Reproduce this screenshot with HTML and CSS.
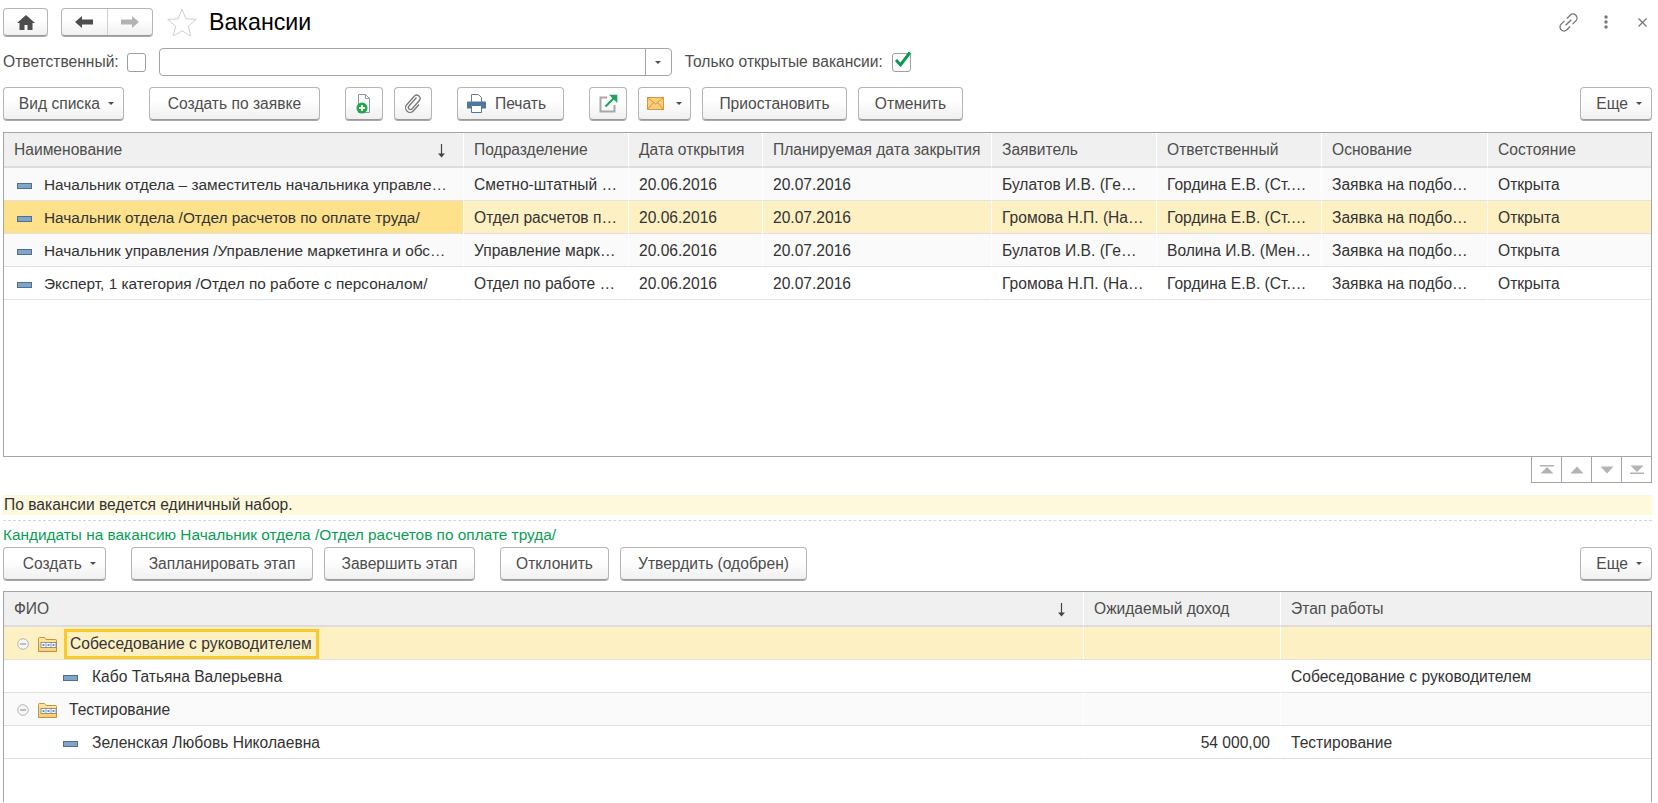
FILE: index.html
```html
<!DOCTYPE html>
<html lang="ru">
<head>
<meta charset="utf-8">
<title>Вакансии</title>
<link rel="stylesheet" href="styles.css">
</head>
<body>
<svg class="sprites" width="0" height="0" aria-hidden="true">
  <defs>
    <linearGradient id="fold" x1="0" y1="0" x2="0" y2="1"><stop offset="0" stop-color="#fde9a6"/><stop offset="1" stop-color="#f7cf72"/></linearGradient>
    <symbol id="dash" viewBox="0 0 15 6"><rect x=".5" y=".5" width="14" height="5" fill="#7fa6c9" stroke="#4f6f8f"/></symbol>
    <symbol id="folder" viewBox="0 0 19 16"><path d="M.5 15.5V2.5a1 1 0 0 1 1-1h5l1.500 2h9.500a1 1 0 0 1 1 1v11z" fill="url(#fold)" stroke="#c98f3c"/><rect x="3" y="6.500" width="15" height="5" fill="#fff" stroke="#6f7f8f" stroke-width=".8"/><path d="M8 6.500v5M13 6.500v5" stroke="#6f7f8f" stroke-width=".8"/><rect x="4.500" y="8" width="2" height="2" fill="#6f8fb0"/><rect x="9.500" y="8" width="2" height="2" fill="#6f8fb0"/><rect x="14.500" y="8" width="2" height="2" fill="#6f8fb0"/></symbol>
    <symbol id="collapse" viewBox="0 0 12 12"><circle cx="6" cy="6" r="5.300" fill="#f6f6f6" stroke="#b5b5b5"/><path d="M3 6h6" stroke="#8a8a8a"/></symbol>
    <symbol id="down" viewBox="0 0 9 14"><path d="M4.500 0v11" stroke="#444" stroke-width="1.200"/><path d="M1 9.500h7l-3.500 4z" fill="#444"/></symbol>
  </defs>
</svg>

<header class="titlebar">
  <button class="btn nav-home" aria-label="Домой"><svg width="18" height="15" viewBox="0 0 18 15"><path d="M9 0 0 8h2.500v7h5v-5h3v5h5V8H18z" fill="#4d4d4d"/></svg></button>
  <div class="btn nav-group">
    <span class="nav-cell"><svg width="18" height="12" viewBox="0 0 18 12"><path d="M0 6l7-6v3.500h11v5H7V12z" fill="#4d4d4d"/></svg></span>
    <span class="nav-cell"><svg width="18" height="12" viewBox="0 0 18 12"><path d="M18 6l-7-6v3.500H0v5h11V12z" fill="#b3b3b3"/></svg></span>
  </div>
  <svg class="star" width="30" height="28" viewBox="0 0 30 28"><path d="M15 1l3.900 9.800 10.400.6-8 6.700 2.600 10.200L15 22.700l-8.900 5.600 2.600-10.200-8-6.700 10.400-.6z" fill="none" stroke="#c9cfd3"/></svg>
  <h1 class="title">Вакансии</h1>
  <div class="window-tools">
    <svg width="23" height="23" viewBox="0 0 20 20"><g transform="rotate(-45 10 10)" fill="none" stroke="#777" stroke-width="1.200"><path d="M8.500 6.500H4.500a3.500 3.500 0 0 0 0 7h4"/><path d="M11.500 6.500h4a3.500 3.500 0 0 1 0 7h-4"/><path d="M6.500 10h7"/></g></svg>
    <svg class="tool-dots" width="4" height="14" viewBox="0 0 4 14"><circle cx="2" cy="2" r="1.700" fill="#777"/><circle cx="2" cy="7" r="1.700" fill="#777"/><circle cx="2" cy="12" r="1.700" fill="#777"/></svg>
    <svg class="tool-close" width="9" height="9" viewBox="0 0 9 9"><path d="M.5.500l8 8M8.500.500l-8 8" stroke="#777" stroke-width="1.200"/></svg>
  </div>
</header>

<section class="filters">
  <span class="label">Ответственный:</span>
  <span class="check"></span>
  <div class="combo"><span class="combo-field"></span><span class="combo-drop"><i class="caret"></i></span></div>
  <span class="label label-open">Только открытые вакансии:</span>
  <span class="check check-on"><svg width="20" height="20" viewBox="0 0 20 20"><path d="M3 9l4.500 5L17 1.500" fill="none" stroke="#0c9a50" stroke-width="3"/></svg></span>
</section>

<div class="toolbar toolbar-top">
  <button class="btn menu w-view">Вид списка<i class="caret"></i></button>
  <button class="btn w-make gap-l">Создать по заявке</button>
  <button class="btn icon gap-l" aria-label="Новый файл"><svg width="16" height="20" viewBox="0 0 16 20"><path d="M2.500.500h7l4 4v14h-11z" fill="#fff" stroke="#8b98a5"/><path d="M9.500.500v4h4" fill="none" stroke="#8b98a5"/><circle cx="6" cy="14" r="5.500" fill="#22a64a"/><path d="M3 14h6M6 11v6" stroke="#fff" stroke-width="1.800"/></svg></button>
  <button class="btn icon gap-s" aria-label="Вложение"><svg width="18" height="20" viewBox="0 0 18 20"><path d="M12.500 3.500 4.800 12.200a2.100 2.100 0 0 0 3.100 2.800l7.300-8.300a3.300 3.300 0 0 0-5-4.400L2.700 10.800a4.500 4.500 0 0 0 6.800 6l5.500-6.300" fill="none" stroke="#777" stroke-width="1.300"/></svg></button>
  <button class="btn w-print gap-l"><svg class="print-icon" width="19" height="19" viewBox="0 0 19 19"><path d="M4.500.500h7l3 3v6h-10z" fill="#fff" stroke="#6d7d8d"/><path d="M1 7.500h17a1 1 0 0 1 1 1v6h-4v-3H4v3H0v-6a1 1 0 0 1 1-1z" fill="#4f76a0"/><path d="M4.500 11.500h10v7h-10z" fill="#fff" stroke="#4f76a0"/></svg>Печать</button>
  <button class="btn icon gap-l" aria-label="Открыть"><svg width="19" height="19" viewBox="0 0 19 19"><path d="M8 3.500H1.500v14h14V11" fill="none" stroke="#a8a8a8" stroke-width="2"/><path d="M6.500 12.500 16 3" stroke="#1ea362" stroke-width="2.200"/><path d="M10 .700h8.300V9z" fill="#1ea362"/></svg></button>
  <button class="btn w-mail gap-s" aria-label="Почта"><svg width="17" height="13" viewBox="0 0 17 13"><rect x=".5" y=".5" width="16" height="12" fill="#f7cf7c" stroke="#d8963a"/><path d="M.5.500 8.500 7l8-6.500M.5 12.500l6-7M16.500 12.500l-6-7" fill="none" stroke="#d8963a"/></svg><i class="caret caret-mail"></i></button>
  <button class="btn w-pause gap-s">Приостановить</button>
  <button class="btn w-cancel gap-s">Отменить</button>
  <button class="btn menu w-more push">Еще<i class="caret"></i></button>
</div>

<section class="grid grid-top">
  <table>
    <colgroup><col class="c1"><col class="c2"><col class="c3"><col class="c4"><col class="c5"><col class="c6"><col class="c7"><col></colgroup>
    <thead><tr>
      <th class="sorted">Наименование<svg class="sort" width="9" height="14"><use href="#down"/></svg></th>
      <th>Подразделение</th><th>Дата открытия</th><th>Планируемая дата закрытия</th><th>Заявитель</th><th>Ответственный</th><th>Основание</th><th>Состояние</th>
    </tr></thead>
    <tbody>
      <tr class="odd"><td class="name"><svg class="dash" width="15" height="6"><use href="#dash"/></svg>Начальник отдела – заместитель начальника управле…</td><td>Сметно-штатный …</td><td>20.06.2016</td><td>20.07.2016</td><td>Булатов И.В. (Ге…</td><td>Гордина Е.В. (Ст.…</td><td>Заявка на подбо…</td><td>Открыта</td></tr>
      <tr class="sel"><td class="name current"><svg class="dash" width="15" height="6"><use href="#dash"/></svg>Начальник отдела /Отдел расчетов по оплате труда/</td><td>Отдел расчетов п…</td><td>20.06.2016</td><td>20.07.2016</td><td>Громова Н.П. (На…</td><td>Гордина Е.В. (Ст.…</td><td>Заявка на подбо…</td><td>Открыта</td></tr>
      <tr class="odd"><td class="name"><svg class="dash" width="15" height="6"><use href="#dash"/></svg>Начальник управления /Управление маркетинга и обс…</td><td>Управление марк…</td><td>20.06.2016</td><td>20.07.2016</td><td>Булатов И.В. (Ге…</td><td>Волина И.В. (Мен…</td><td>Заявка на подбо…</td><td>Открыта</td></tr>
      <tr class="even"><td class="name"><svg class="dash" width="15" height="6"><use href="#dash"/></svg>Эксперт, 1 категория /Отдел по работе с персоналом/</td><td>Отдел по работе …</td><td>20.06.2016</td><td>20.07.2016</td><td>Громова Н.П. (На…</td><td>Гордина Е.В. (Ст.…</td><td>Заявка на подбо…</td><td>Открыта</td></tr>
    </tbody>
  </table>
</section>
<div class="pager">
  <span class="page"><svg width="14" height="9" viewBox="0 0 14 9"><path d="M0 0h14v1.500H0zM7 2l6.500 6.500H.5z" fill="#b3b3b3"/></svg></span>
  <span class="page"><svg width="14" height="8" viewBox="0 0 14 8"><path d="M7 .5l6.500 7H.5z" fill="#b3b3b3"/></svg></span>
  <span class="page"><svg width="14" height="8" viewBox="0 0 14 8"><path d="M7 7.500l6.500-7H.5z" fill="#b3b3b3"/></svg></span>
  <span class="page"><svg width="14" height="9" viewBox="0 0 14 9"><path d="M0 7.500h14V9H0zM7 7 .5 .5h13z" fill="#b3b3b3"/></svg></span>
</div>

<p class="notice">По вакансии ведется единичный набор.</p>
<h2 class="subhead">Кандидаты на вакансию Начальник отдела /Отдел расчетов по оплате труда/</h2>

<div class="toolbar toolbar-bottom">
  <button class="btn menu w-create">Создать<i class="caret"></i></button>
  <button class="btn w-plan gap-l">Запланировать этап</button>
  <button class="btn w-finish gap-s">Завершить этап</button>
  <button class="btn w-reject gap-l">Отклонить</button>
  <button class="btn w-approve gap-s">Утвердить (одобрен)</button>
  <button class="btn menu w-more push">Еще<i class="caret"></i></button>
</div>

<section class="grid grid-bottom">
  <table>
    <colgroup><col class="b1"><col class="b2"><col></colgroup>
    <thead><tr>
      <th class="sorted">ФИО<svg class="sort" width="9" height="14"><use href="#down"/></svg></th><th>Ожидаемый доход</th><th>Этап работы</th>
    </tr></thead>
    <tbody>
      <tr class="sel-soft"><td class="group"><svg class="toggle" width="12" height="12"><use href="#collapse"/></svg><svg class="folder" width="19" height="16"><use href="#folder"/></svg><span class="focus">Собеседование с руководителем</span></td><td></td><td></td></tr>
      <tr class="plain"><td class="person"><svg class="dash" width="15" height="6"><use href="#dash"/></svg>Кабо Татьяна Валерьевна</td><td></td><td>Собеседование с руководителем</td></tr>
      <tr class="odd"><td class="group"><svg class="toggle" width="12" height="12"><use href="#collapse"/></svg><svg class="folder" width="19" height="16"><use href="#folder"/></svg><span class="nofocus">Тестирование</span></td><td></td><td></td></tr>
      <tr class="plain"><td class="person"><svg class="dash" width="15" height="6"><use href="#dash"/></svg>Зеленская Любовь Николаевна</td><td class="num">54 000,00</td><td>Тестирование</td></tr>
    </tbody>
  </table>
</section>
</body>
</html>
```
FILE: styles.css
```css
* { box-sizing: border-box; }
html, body { height: 100%; }
body { margin: 0; padding: 8px 6px 0 3px; height: 803px; overflow: hidden; background: #fff; font: 15.6px "Liberation Sans", Arial, sans-serif; color: #4d4d4d; }
.sprites { position: absolute; }

.btn { display: inline-flex; align-items: center; justify-content: center; height: 33px; padding: 0; border: 1px solid #b5b5b5; border-bottom-color: #9a9a9a; border-radius: 4px; background: linear-gradient(#fff 40%, #f0f0f0); box-shadow: 0 1px 0 #aaa; font: inherit; color: #4d4d4d; white-space: nowrap; }

.titlebar { display: flex; align-items: center; height: 28px; }
.nav-home { width: 45px; height: 28px; }
.nav-group { width: 92px; height: 28px; margin-left: 13px; }
.nav-cell { flex: 1; height: 100%; display: flex; align-items: center; justify-content: center; }
.nav-cell + .nav-cell { border-left: 1px solid #d0d0d0; }
.star { margin-left: 14px; }
.title { margin: 0 0 0 12px; font-size: 23.2px; font-weight: 400; color: #000; }
.window-tools { margin-left: auto; display: flex; align-items: center; padding-right: 5px; }
.tool-dots { margin-left: 24px; }
.tool-close { margin-left: 30px; }

.filters { display: flex; align-items: center; height: 28px; margin-top: 12px; }
.label { color: #4d4d4d; }
.check { width: 19px; height: 19px; margin-left: 8px; border: 1px solid #9f9f9f; border-radius: 3px; position: relative; background: #fff; }
.check svg { position: absolute; left: 0; top: -3px; }
.check-on { margin-left: 9px; }
.combo { display: flex; width: 513px; height: 28px; margin-left: 13px; border: 1px solid #a5a5a5; border-radius: 4px; }
.combo-field { flex: 1; }
.combo-drop { width: 26px; border-left: 1px solid #a5a5a5; display: flex; align-items: center; justify-content: center; }
.label-open { margin-left: 13px; }
.caret { display: inline-block; width: 0; height: 0; border: 3px solid transparent; border-top: 3.500px solid #4d4d4d; border-bottom: 0; }

.toolbar { display: flex; align-items: center; }
.toolbar-top { margin-top: 11px; }
.toolbar-bottom { margin-top: 2px; }
.gap-l { margin-left: 25px; }
.gap-s { margin-left: 11px; }
.push { margin-left: auto; }
.menu { justify-content: flex-end; padding-right: 9px; }
.menu .caret { margin-left: 8px; }
.icon { width: 38px; }
.w-view { width: 121px; }
.w-make { width: 171px; }
.w-print { width: 107px; justify-content: flex-start; padding-left: 9px; }
.print-icon { margin-right: 9px; }
.w-mail { width: 53px; }
.caret-mail { margin-left: 12px; }
.w-pause { width: 145px; }
.w-cancel { width: 105px; }
.w-more { width: 72px; }
.w-create { width: 103px; }
.w-plan { width: 182px; }
.w-finish { width: 151px; }
.w-reject { width: 109px; }
.w-approve { width: 187px; }

.grid { border: 1px solid #a5a5a5; background: #fff; overflow: hidden; }
.grid-top { height: 325px; margin-top: 12px; }
.grid-bottom { height: 211px; margin-top: 11px; border-bottom: 0; }
table { width: 100%; border-collapse: separate; border-spacing: 0; table-layout: fixed; }
th { height: 35px; padding: 0 10px; text-align: left; font-weight: 400; color: #4d4d4d; background: #f0f0f0; border-right: 1px solid #fff; border-bottom: 2px solid #dcdcdc; position: relative; white-space: nowrap; overflow: hidden; }
th:last-child { border-right: 0; }
td { height: 33px; padding: 1px 10px 0; color: #333; border-right: 1px solid #fff; border-bottom: 1px solid #e0e0e0; white-space: nowrap; overflow: hidden; }
td:last-child { border-right: 0; }
.sort { position: absolute; right: 17px; top: 11px; }
.c1 { width: 460px; } .c2 { width: 165px; } .c3 { width: 134px; } .c4 { width: 229px; } .c5 { width: 165px; } .c6 { width: 165px; } .c7 { width: 166px; }
.b1 { width: 1080px; } .b2 { width: 197px; }
.odd td { background: #fafafa; }
.even td { background: #fff; }
.plain td { background: #fff; }
.sel td { background: #fdf0c3; }
.sel td.current { background: #fde18b; }
.sel-soft td { background: #fdf0c3; }
.dash { margin: 0 14px 0 0; vertical-align: 1px; }
.name { padding-left: 13px; font-size: 15.4px; }
.name .dash { margin-right: 12px; }
.person { padding-left: 59px; }
.group { padding-left: 13px; }
.toggle { margin-right: 9px; vertical-align: -1px; }
.folder { margin-right: 6px; vertical-align: -3px; }
.focus { display: inline-block; padding: 3px 4px 3px 3px; line-height: 18px; letter-spacing: .05px; border: 3px solid #fcc92b; background: #fdf0c3; margin-left: 1px; }
.nofocus { padding-left: 6px; }
.num { text-align: right; }

.pager { display: flex; justify-content: flex-end; }
.page { width: 31px; height: 26px; border: 1px solid #a5a5a5; border-top: 0; margin-left: -1px; display: flex; align-items: center; justify-content: center; }

.notice { margin: 12px 0 0; padding-left: 1px; height: 20px; line-height: 20px; background: #fef8dc; color: #333; }
.subhead { margin: 5px 0 0; padding-top: 4px; border-top: 1px dashed #d6d6d6; font-size: 15.4px; font-weight: 400; line-height: 20px; color: #0a9d55; }
```
